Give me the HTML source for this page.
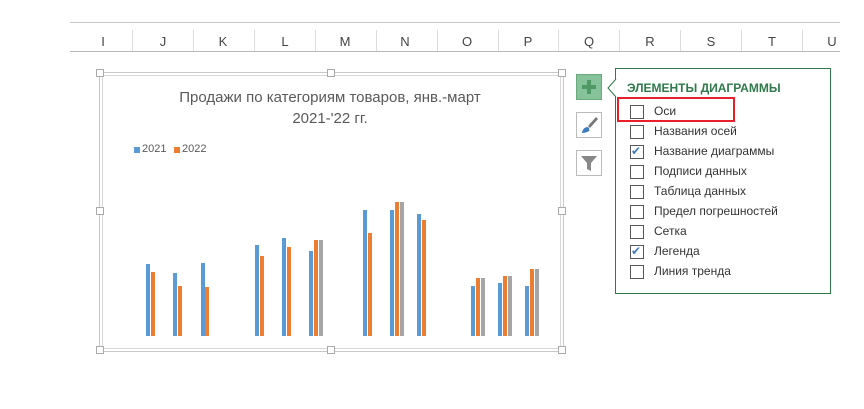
<!DOCTYPE html>
<html><head><meta charset="utf-8"><style>
body{margin:0;width:864px;height:409px;background:#fff;position:relative;overflow:hidden;font-family:"Liberation Sans",sans-serif}
.a{position:absolute}
.hl{position:absolute;left:70px;width:770px;height:1px;background:#c8c8c8}
.col{position:absolute;top:34px;font-size:13px;color:#444;width:20px;text-align:center}
.sep{position:absolute;top:30px;width:1px;height:21px;background:#dcdcdc}
.b{position:absolute;width:4px}
.bl{background:#5b9bd5}.or{background:#ed7d31}.gr{background:#a5a5a5}
.h{position:absolute;width:6px;height:6px;border:1px solid #aaa;background:#fff}
.cb{position:absolute;left:630px;width:12px;height:12px;border:1px solid #555;background:#fff}
.it{position:absolute;left:654px;font-size:12px;color:#333}
.ck{position:absolute;left:631px;font-size:12px;color:#3e7ac0}
.btn{position:absolute;left:576px;width:24px;height:24px;border:1px solid #bbb;background:#fff}
</style></head><body>
<div class="hl" style="top:22px"></div>
<div class="hl" style="top:51px;background:#b8b8b8"></div>
<div class="col" style="left:93px">I</div><div class="col" style="left:153px">J</div><div class="col" style="left:213px">K</div><div class="col" style="left:275px">L</div><div class="col" style="left:335px">M</div><div class="col" style="left:395px">N</div><div class="col" style="left:457px">O</div><div class="col" style="left:518px">P</div><div class="col" style="left:579px">Q</div><div class="col" style="left:640px">R</div><div class="col" style="left:701px">S</div><div class="col" style="left:762px">T</div><div class="col" style="left:822px">U</div>
<div class="sep" style="left:132px"></div><div class="sep" style="left:193px"></div><div class="sep" style="left:254px"></div><div class="sep" style="left:315px"></div><div class="sep" style="left:376px"></div><div class="sep" style="left:437px"></div><div class="sep" style="left:498px"></div><div class="sep" style="left:558px"></div><div class="sep" style="left:619px"></div><div class="sep" style="left:680px"></div><div class="sep" style="left:741px"></div><div class="sep" style="left:802px"></div>

<div class="a" style="left:99px;top:72px;width:463px;height:278px;border:1px solid #c8c8c8"></div>
<div class="a" style="left:102px;top:75px;width:457px;height:272px;border:1px solid #d8d8d8"></div>
<div class="h" style="left:96px;top:69px"></div><div class="h" style="left:327px;top:69px"></div><div class="h" style="left:558px;top:69px"></div>
<div class="h" style="left:96px;top:207px"></div><div class="h" style="left:558px;top:207px"></div>
<div class="h" style="left:96px;top:346px"></div><div class="h" style="left:327px;top:346px"></div><div class="h" style="left:558px;top:346px"></div>

<div class="a" style="left:150px;top:87px;width:360px;text-align:center;font-size:15px;line-height:21px;color:#595959">Продажи по категориям товаров, янв.-март<br>2021-'22 гг.</div>
<div class="a bl" style="left:134px;top:147px;width:6px;height:6px"></div><div class="a" style="left:142px;top:143px;font-size:11px;color:#595959">2021</div>
<div class="a or" style="left:174px;top:147px;width:6px;height:6px"></div><div class="a" style="left:182px;top:143px;font-size:11px;color:#595959">2022</div>

<div class="b bl" style="left:146px;top:264px;height:72px"></div><div class="b or" style="left:151px;top:272px;height:64px"></div>
<div class="b bl" style="left:173px;top:273px;height:63px"></div><div class="b or" style="left:178px;top:286px;height:50px"></div>
<div class="b bl" style="left:201px;top:263px;height:73px"></div><div class="b or" style="left:205px;top:287px;height:49px"></div>
<div class="b bl" style="left:255px;top:245px;height:91px"></div><div class="b or" style="left:260px;top:256px;height:80px"></div>
<div class="b bl" style="left:282px;top:238px;height:98px"></div><div class="b or" style="left:287px;top:247px;height:89px"></div>
<div class="b bl" style="left:309px;top:251px;height:85px"></div><div class="b or" style="left:314px;top:240px;height:96px"></div><div class="b gr" style="left:319px;top:240px;height:96px"></div>
<div class="b bl" style="left:363px;top:210px;height:126px"></div><div class="b or" style="left:368px;top:233px;height:103px"></div>
<div class="b bl" style="left:390px;top:210px;height:126px"></div><div class="b or" style="left:395px;top:202px;height:134px"></div><div class="b gr" style="left:400px;top:202px;height:134px"></div>
<div class="b bl" style="left:417px;top:214px;height:122px"></div><div class="b or" style="left:422px;top:220px;height:116px"></div>
<div class="b bl" style="left:471px;top:286px;height:50px"></div><div class="b or" style="left:476px;top:278px;height:58px"></div><div class="b gr" style="left:481px;top:278px;height:58px"></div>
<div class="b bl" style="left:498px;top:283px;height:53px"></div><div class="b or" style="left:503px;top:276px;height:60px"></div><div class="b gr" style="left:508px;top:276px;height:60px"></div>
<div class="b bl" style="left:525px;top:286px;height:50px"></div><div class="b or" style="left:530px;top:269px;height:67px"></div><div class="b gr" style="left:535px;top:269px;height:67px"></div>

<div class="btn" style="top:74px;background:#86c29a;border-color:#6aa87e"><div class="a" style="left:5px;top:10px;width:14px;height:4px;background:#4f9a64"></div><div class="a" style="left:10px;top:5px;width:4px;height:14px;background:#4f9a64"></div></div>
<div class="btn" style="top:112px"><svg width="24" height="24" class="a"><path d="M19 4 L11 13 L13 15 L21 6Z" fill="#777"/><path d="M5 20 Q6 14 11 14 Q13 16 12 18 Q9 20 5 20Z" fill="#3e7ac0"/></svg></div>
<div class="btn" style="top:150px"><svg width="24" height="24" class="a"><path d="M4 5 H20 L14 12 V20 L10 18 V12Z" fill="#888"/></svg></div>

<div class="a" style="left:615px;top:68px;width:214px;height:224px;border:1px solid #2f7a4a;background:#fff"></div>
<svg class="a" style="left:607px;top:79px" width="10" height="20"><path d="M9 0 L1 9 L9 18" fill="#fff" stroke="#2f7a4a"/></svg>
<div class="a" style="left:627px;top:81px;font-size:12px;font-weight:bold;color:#2f7a4a">ЭЛЕМЕНТЫ ДИАГРАММЫ</div>
<div class="a" style="left:617px;top:97px;width:114px;height:21px;border:2px solid #e8202a"></div>
<div class="cb" style="top:105px"></div><div class="it" style="top:104px">Оси</div>
<div class="cb" style="top:125px"></div><div class="it" style="top:124px">Названия осей</div>
<div class="cb" style="top:145px"></div><div class="ck" style="top:144px">✔</div><div class="it" style="top:144px">Название диаграммы</div>
<div class="cb" style="top:165px"></div><div class="it" style="top:164px">Подписи данных</div>
<div class="cb" style="top:185px"></div><div class="it" style="top:184px">Таблица данных</div>
<div class="cb" style="top:205px"></div><div class="it" style="top:204px">Предел погрешностей</div>
<div class="cb" style="top:225px"></div><div class="it" style="top:224px">Сетка</div>
<div class="cb" style="top:245px"></div><div class="ck" style="top:244px">✔</div><div class="it" style="top:244px">Легенда</div>
<div class="cb" style="top:265px"></div><div class="it" style="top:264px">Линия тренда</div>
</body></html>
